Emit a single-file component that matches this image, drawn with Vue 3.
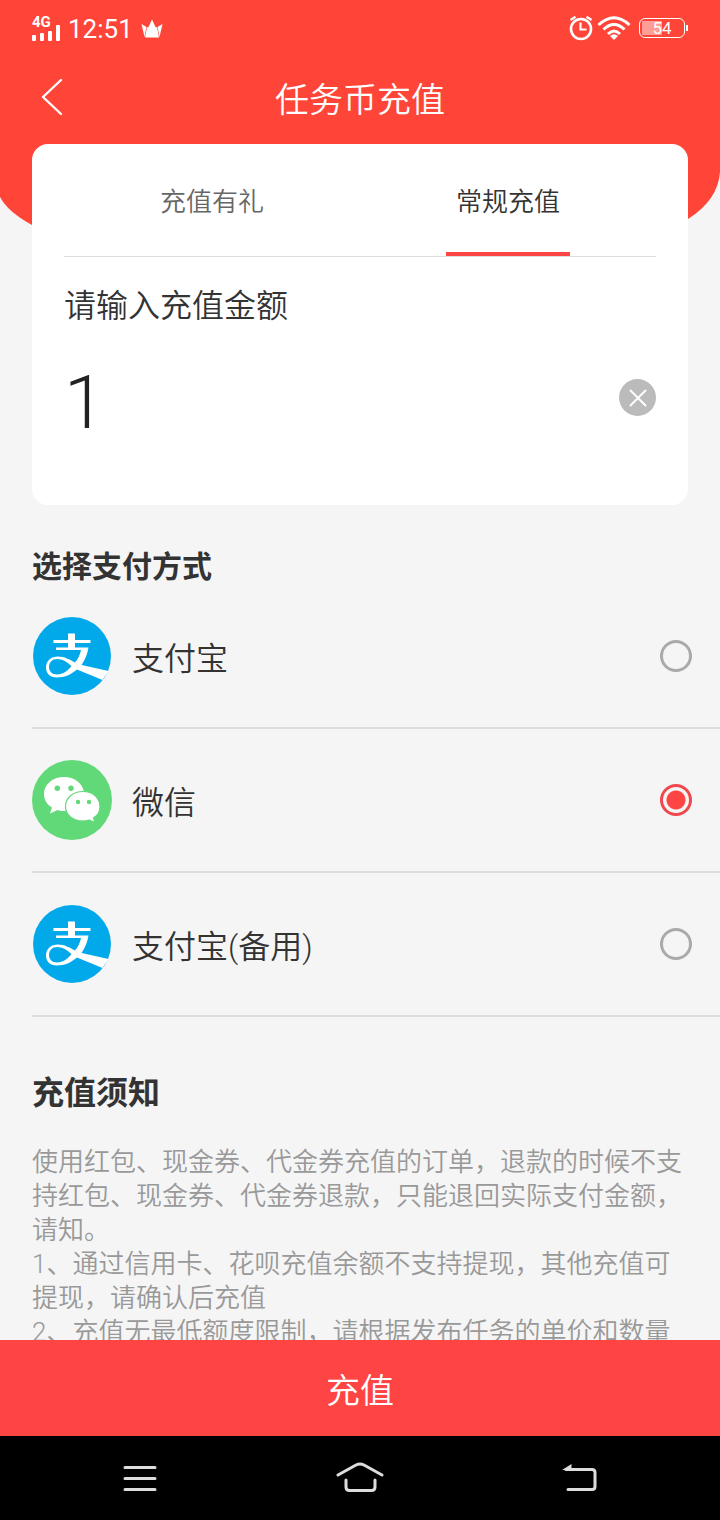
<script setup>
import { ref } from 'vue'

const tabs = ['充值有礼', '常规充值']
const activeTab = ref(1)
const amount = ref('1')
const method = ref('wechat')
const methods = [
  { id: 'alipay', name: '支付宝', icon: 'alipay' },
  { id: 'wechat', name: '微信', icon: 'wechat' },
  { id: 'alipay-backup', name: '支付宝(备用)', icon: 'alipay' }
]
const notices = [
  '使用红包、现金券、代金券充值的订单，退款的时候不支持红包、现金券、代金券退款，只能退回实际支付金额，请知。',
  '1、通过信用卡、花呗充值余额不支持提现，其他充值可提现，请确认后充值',
  '2、充值无最低额度限制，请根据发布任务的单价和数量'
]
</script>

<template>
  <div class="screen">
    <div class="scroll">
      <svg class="backdrop" viewBox="0 0 720 240" preserveAspectRatio="none" aria-hidden="true">
        <path d="M0 0H720V172Q718 200 688 219L640 240H60L32 225Q8 212 0 197Z" fill="#ff4438" />
      </svg>

      <div class="status">
        <div class="group">
          <div class="signal">
            <span class="net">4G</span>
            <svg width="28" height="16" viewBox="0 0 28 16" fill="#fff" aria-hidden="true">
              <rect x="0" y="10" width="4" height="6" rx="1" />
              <rect x="8" y="8" width="4" height="8" rx="1" />
              <rect x="16" y="6" width="4" height="10" rx="1" />
              <rect x="24" y="0" width="4" height="16" rx="1" />
            </svg>
          </div>
          <span class="time">12:51</span>
          <svg width="22" height="20" viewBox="0 0 22 20" fill="#fff" aria-hidden="true">
            <path d="M4 18.500L6 8.500L7.500 8L11 0.500L14.500 8L16 8.500L18 18.500Z" />
            <path d="M0.500 5L5.500 8L3.500 18Z" />
            <path d="M21.500 5L16.500 8L18.500 18Z" />
          </svg>
        </div>
        <div class="group right">
          <svg width="24" height="26" viewBox="0 0 24 26" fill="none" stroke="#fff" aria-hidden="true">
            <circle cx="12" cy="14" r="10" stroke-width="2.600" />
            <path d="M11.500 7.500V14.500H17.500" stroke-width="2.200" />
            <path d="M1.500 5L6.500 1.800M22.500 5L17.500 1.800" stroke-width="2.200" />
          </svg>
          <svg width="34" height="26" viewBox="0 0 34 26" fill="none" stroke="#fff" stroke-width="3" aria-hidden="true">
            <path d="M1.500 10Q17 -4.500 32.500 10" />
            <path d="M6.500 14.500Q17 4.500 27.500 14.500" />
            <path d="M11 19Q17 13 23 19" />
            <path d="M17 25L13 21Q17 17.500 21 21Z" fill="#fff" stroke="none" />
          </svg>
          <div class="battery">
            <span class="cell">54</span>
            <span class="tip"></span>
          </div>
        </div>
      </div>

      <header class="header">
        <button class="back" type="button" aria-label="返回">
          <svg width="22" height="38" viewBox="0 0 22 38" fill="none" stroke="#fff" stroke-width="2.400" stroke-linecap="round" stroke-linejoin="round" aria-hidden="true">
            <path d="M20 2L2 19L20 36" />
          </svg>
        </button>
        <h1>任务币充值</h1>
      </header>

      <section class="card">
        <div class="tabs" role="tablist">
          <button
            v-for="(tab, i) in tabs"
            :key="tab"
            type="button"
            role="tab"
            class="tab"
            :class="{ active: activeTab === i }"
            :aria-selected="activeTab === i"
            @click="activeTab = i"
          >{{ tab }}</button>
        </div>
        <label class="label" for="amount">请输入充值金额</label>
        <div class="entry">
          <input id="amount" v-model="amount" class="amount" type="text" inputmode="decimal" />
          <button class="clear" type="button" aria-label="清除" @click="amount = ''">
            <svg width="18" height="18" viewBox="0 0 18 18" stroke="#fff" stroke-width="2" stroke-linecap="round" aria-hidden="true">
              <path d="M1.500 1.500L16.500 16.500M16.500 1.500L1.500 16.500" />
            </svg>
          </button>
        </div>
      </section>

      <h2 class="pay-title">选择支付方式</h2>
      <div class="methods">
        <label v-for="m in methods" :key="m.id" class="method">
          <svg v-if="m.icon === 'alipay'" class="logo" viewBox="0 0 80 80" aria-hidden="true">
            <circle cx="40" cy="40" r="39" fill="#02a9ea" />
            <path d="M36 17.500H43V24H58.500V27H43V31.500H56.500C55.500 38 53 44 49.500 49L76.500 55L70.500 64L45 53.500C39 58.500 33 61.500 25 61.500C18 61.500 14 57.500 14 51.500C14 45 19 40.500 26 40.500C32 40.500 38 43.500 43 46.500C46 43 48 39 49 34H24V31.500H36V27H21.500V24H36Z" fill="#fff" />
            <path d="M39.500 50C34.500 45.500 30 43 25.500 43C20 43 17 46.500 17 51C17 55.500 20 58.500 25 58.500C31 58.500 36 54.500 39.500 50Z" fill="#02a9ea" />
          </svg>
          <svg v-else class="logo" viewBox="0 0 80 80" aria-hidden="true">
            <circle cx="40" cy="40" r="40" fill="#62d978" />
            <path d="M32 17C20.500 17 12 24.500 12 34C12 40 15 44.500 20 47.500L18 53.500L25.500 50C28 51 30 51 32 51C43.500 51 52 43.500 52 34C52 24.500 43.500 17 32 17Z" fill="#fff" />
            <circle cx="25.300" cy="28.300" r="2.700" fill="#62d978" />
            <circle cx="39" cy="28.300" r="2.700" fill="#62d978" />
            <path d="M51 31.500C41 31.500 33.500 38 33.500 46.500C33.500 55 41 61 51 61C53 61 55 60.700 57 60L63 62.500L61.500 58C66 55.500 68 51 68 46.500C68 38 61 31.500 51 31.500Z" fill="#fff" stroke="#62d978" stroke-width="1.200" />
            <circle cx="46" cy="42" r="2.200" fill="#62d978" />
            <circle cx="57" cy="42" r="2.200" fill="#62d978" />
          </svg>
          <span class="name">{{ m.name }}</span>
          <input v-model="method" class="radio" type="radio" name="method" :value="m.id" />
        </label>
      </div>

      <section class="notice">
        <h2>充值须知</h2>
        <p v-for="n in notices" :key="n">{{ n }}</p>
      </section>
    </div>

    <button class="submit" type="button">充值</button>

    <nav class="system">
      <button type="button" aria-label="最近任务">
        <svg width="48" height="36" viewBox="0 0 48 36" fill="none" stroke="#ddd" stroke-width="3" stroke-linecap="round" aria-hidden="true">
          <path d="M9 7.500H39M9 18.500H39M9 29.500H39" />
        </svg>
      </button>
      <button type="button" aria-label="主屏幕">
        <svg width="48" height="36" viewBox="0 0 48 36" fill="none" stroke="#ddd" stroke-width="3" stroke-linecap="round" aria-hidden="true">
          <path d="M2 15L20 5Q24 3 28 5L46 15" />
          <path d="M10 20V27Q10 30.500 13.500 30.500H35.500Q39 30.500 39 27V20" />
        </svg>
      </button>
      <button type="button" aria-label="返回上一级">
        <svg width="48" height="36" viewBox="0 0 48 36" fill="none" stroke="#ddd" stroke-width="3" stroke-linecap="round" aria-hidden="true">
          <path d="M10 9.500H36Q39 9.500 39 12.500V26.500Q39 29.500 36 29.500H12" />
          <path d="M6 10L15.500 4V10Z" fill="#ddd" stroke="none" />
        </svg>
      </button>
    </nav>
  </div>
</template>

<style>
body {
  background: #f5f5f5;
}
</style>

<style scoped>
.screen {
  display: flex;
  flex-direction: column;
  height: 100vh;
  background: #f5f5f5;
  color: #333;
  font-family: Roboto, "Noto Sans CJK SC", sans-serif;
  font-weight: 350;
}
.screen * {
  box-sizing: border-box;
}
button {
  padding: 0;
  border: 0;
  background: none;
  color: inherit;
  font: inherit;
  cursor: pointer;
}
svg {
  display: block;
  flex: none;
}
h1,
h2,
p {
  margin: 0;
}
.scroll {
  position: relative;
  z-index: 0;
  flex: 1;
  min-height: 0;
  overflow-y: auto;
  scrollbar-width: none;
}
.backdrop {
  position: absolute;
  z-index: -1;
  top: 0;
  left: 0;
  width: 100%;
  height: 240px;
}
.status {
  display: flex;
  justify-content: space-between;
  align-items: center;
  height: 58px;
  padding: 0 32px;
  color: #fff;
  font-weight: 400;
}
.group {
  display: flex;
  align-items: center;
  gap: 8px;
}
.right {
  gap: 4px;
  padding-bottom: 2px;
}
.signal {
  display: flex;
  flex-direction: column;
  height: 24px;
  justify-content: space-between;
  position: relative;
}
.signal svg {
  margin-top: auto;
}
.net {
  position: absolute;
  top: -2px;
  left: 0;
  font-size: 15px;
  line-height: 14px;
  font-weight: 700;
}
.time {
  font-size: 26px;
  line-height: 32px;
}
.battery {
  display: flex;
  align-items: center;
  gap: 1px;
  margin-left: 4px;
}
.cell {
  width: 46px;
  height: 20px;
  border: 1px solid #fff;
  border-radius: 6px;
  background: linear-gradient(90deg, #ff9d97 50%, transparent 50%) 2px 2px / 40px 14px no-repeat;
  font-size: 17px;
  line-height: 18px;
  text-align: center;
}
.tip {
  width: 2px;
  height: 6px;
  background: #fff;
}
.header {
  display: grid;
  grid-template-columns: 104px 1fr 104px;
  align-items: center;
  height: 82px;
  margin-bottom: 4px;
  color: #fff;
}
.back {
  display: flex;
  align-items: center;
  height: 82px;
  padding-left: 41px;
  padding-bottom: 4px;
}
h1 {
  padding-top: 2px;
  font-size: 34px;
  line-height: 48px;
  font-weight: 350;
  text-align: center;
}
.card {
  margin: 0 32px;
  padding: 0 32px 48px;
  border-radius: 16px;
  background: #fff;
}
.tabs {
  display: grid;
  grid-template-columns: 1fr 1fr;
  justify-items: center;
  border-bottom: 1px solid #ddd;
}
.tab {
  width: 124px;
  height: 112px;
  border-top: 2px solid transparent;
  border-bottom: 4px solid transparent;
  color: #666;
  font-size: 26px;
}
.tab.active {
  border-bottom-color: #ff4444;
  color: #333;
}
.label {
  display: block;
  padding-top: 25px;
  font-size: 32px;
  line-height: 48px;
}
.entry {
  display: flex;
  align-items: center;
  padding-top: 8px;
}
.amount {
  flex: 1;
  min-width: 0;
  height: 119px;
  padding: 10px 0 0;
  border: 0;
  outline: 0;
  background: none;
  color: #222;
  font-family: Roboto, sans-serif;
  font-size: 74px;
  font-weight: 350;
}
.clear {
  display: flex;
  align-items: center;
  justify-content: center;
  width: 37px;
  height: 37px;
  border-radius: 50%;
  background: #bbb;
}
.pay-title {
  padding: 44px 32px 0;
  font-size: 30px;
  line-height: 36px;
}
.method {
  display: flex;
  align-items: center;
  gap: 20px;
  height: 144px;
  margin-left: 32px;
  padding-right: 28px;
  border-bottom: 2px solid #ddd;
  font-size: 32px;
  cursor: pointer;
}
.logo {
  width: 80px;
  height: 80px;
}
.name {
  flex: 1;
}
.radio {
  width: 32px;
  height: 32px;
  margin: 0;
  border: 3px solid #aaa;
  border-radius: 50%;
  appearance: none;
}
.radio:checked {
  border-color: #f0484c;
  background: radial-gradient(circle, #ff4444 9px, transparent 10px);
}
.notice {
  padding: 52px 32px 24px;
  color: #999;
  font-size: 26px;
  line-height: 34px;
}
.notice h2 {
  margin-bottom: 28px;
  color: #333;
  font-size: 32px;
  line-height: 48px;
}
.submit {
  flex: none;
  height: 96px;
  background: #ff4444;
  color: #fff;
  font-size: 34px;
}
.system {
  display: flex;
  flex: none;
  justify-content: space-between;
  align-items: center;
  height: 84px;
  padding: 0 116px;
  background: #000;
}
</style>
